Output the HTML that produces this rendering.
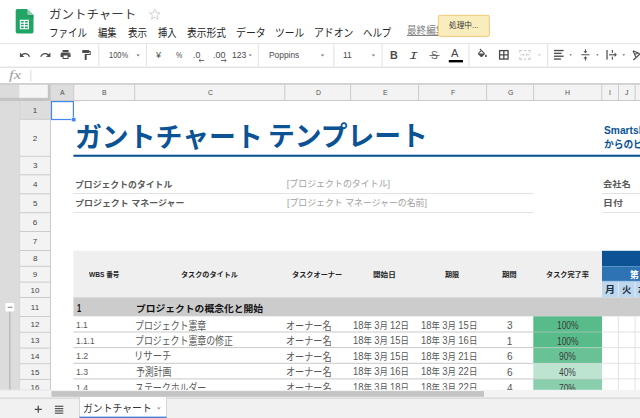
<!DOCTYPE html>
<html lang="ja">
<head>
<meta charset="utf-8">
<title>ガントチャート</title>
<style>
*{box-sizing:border-box;margin:0;padding:0}
html,body{width:640px;height:418px;overflow:hidden;background:#fff}
body{font-family:"Liberation Sans","Noto Sans CJK JP",sans-serif;color:#222;position:relative}
#geo{position:absolute;left:0;top:0;width:640px;height:418px}
#top{position:absolute;left:0;top:0;width:640px;height:418px;pointer-events:none}
.t{position:absolute;white-space:pre;line-height:1;transform-origin:0 50%}
</style>
</head>
<body>
<svg id="geo" width="640" height="418" viewBox="0 0 640 418">
<!-- ===== sheet content ===== -->
<g id="sheet">
  <!-- title underline -->
  <rect x="73.400" y="154.700" width="567" height="2.100" fill="#0b5394"/>
  <!-- info lines -->
  <g fill="#e2e2e2">
    <rect x="73.400" y="193" width="460" height="1"/><rect x="73.400" y="212" width="460" height="1"/>
    <rect x="601.800" y="193" width="39" height="1"/><rect x="601.800" y="212" width="39" height="1"/>
  </g>
  <!-- table header bg -->
  <rect x="73.400" y="250.800" width="528.600" height="46.500" fill="#efefef"/>
  <rect x="602" y="250.800" width="38" height="15.600" fill="#0b5394"/>
  <rect x="602" y="266.400" width="38" height="14.700" fill="#2e74b5"/>
  <rect x="602" y="266.200" width="38" height="0.600" fill="#5b93c9"/>
  <rect x="602" y="281.100" width="38" height="16.200" fill="#bdd7ee"/>
  <rect x="617.900" y="281.100" width="0.900" height="16.200" fill="#e4eef8"/>
  <rect x="634.600" y="281.100" width="0.900" height="16.200" fill="#e4eef8"/>
  <rect x="602" y="280.800" width="38" height="0.700" fill="#8db4dc"/>
  <!-- row 11 -->
  <rect x="73.400" y="297.300" width="567" height="19" fill="#cccccc"/>
  <!-- green cells -->
  <rect x="533.300" y="316.300" width="68.700" height="15.700" fill="#57bb8a"/>
  <rect x="533.300" y="332" width="68.700" height="15.600" fill="#57bb8a"/>
  <rect x="533.300" y="347.600" width="68.700" height="15.700" fill="#68c296"/>
  <rect x="533.300" y="363.300" width="68.700" height="15.600" fill="#bce4d0"/>
  <rect x="533.300" y="378.900" width="68.700" height="15.700" fill="#89cfad"/>
  <!-- row lines -->
  <g fill="#c9c9c9">
    <rect x="73.400" y="331.500" width="460" height="1"/><rect x="73.400" y="347.100" width="460" height="1"/>
    <rect x="73.400" y="362.800" width="460" height="1"/><rect x="73.400" y="378.400" width="460" height="1"/>
  </g>
  <g fill="#d0d0d0" fill-opacity="0.550">
    <rect x="533.300" y="331.500" width="68.700" height="1"/><rect x="533.300" y="347.100" width="68.700" height="1"/>
    <rect x="533.300" y="362.800" width="68.700" height="1"/><rect x="533.300" y="378.400" width="68.700" height="1"/>
  </g>
  <!-- grid on right -->
  <g fill="#e3e3e3">
    <rect x="602" y="331.500" width="38" height="1"/><rect x="602" y="347.100" width="38" height="1"/>
    <rect x="602" y="362.800" width="38" height="1"/><rect x="602" y="378.400" width="38" height="1"/>
    <rect x="617.900" y="316.300" width="1" height="74"/><rect x="634.600" y="316.300" width="1" height="74"/>
  </g>
  <!-- selection -->
  <rect x="51.500" y="101.600" width="21.900" height="17.900" fill="none" stroke="#4285f4" stroke-width="1.200"/>
  <rect x="71.500" y="117.400" width="4.400" height="4.400" fill="#4285f4" stroke="#fff" stroke-width="0.600"/>
</g>
<!-- ===== headers ===== -->
<g id="headers">
  <!-- column header -->
  <rect x="0" y="84.500" width="640" height="16" fill="#f3f3f3"/>
  <rect x="50.600" y="84.500" width="22.900" height="16" fill="#dddddd"/>
  <g fill="#cbcbcb">
    <rect x="73.200" y="84.500" width="1" height="16"/><rect x="134.200" y="84.500" width="1" height="16"/><rect x="284.300" y="84.500" width="1" height="16"/>
    <rect x="350.100" y="84.500" width="1" height="16"/><rect x="418.100" y="84.500" width="1" height="16"/><rect x="486.100" y="84.500" width="1" height="16"/>
    <rect x="533.100" y="84.500" width="1" height="16"/><rect x="601.300" y="84.500" width="1" height="16"/><rect x="618" y="84.500" width="1" height="16"/>
    <rect x="634.600" y="84.500" width="1" height="16"/>
    <rect x="50.600" y="100" width="590" height="1"/>
  </g>
  <!-- row header -->
  <rect x="19.500" y="101" width="31.400" height="289" fill="#f3f3f3"/>
  <rect x="19.500" y="101" width="31.400" height="18" fill="#dddddd"/>
  <g fill="#cbcbcb">
    <rect x="19.300" y="101" width="0.800" height="289"/><rect x="50" y="101" width="1" height="289"/>
    <rect x="19.500" y="118.800" width="31" height="1"/><rect x="19.500" y="155.800" width="31" height="1"/><rect x="19.500" y="174.300" width="31" height="1"/>
    <rect x="19.500" y="193.300" width="31" height="1"/><rect x="19.500" y="212.200" width="31" height="1"/><rect x="19.500" y="231" width="31" height="1"/>
    <rect x="19.500" y="250" width="31" height="1"/><rect x="19.500" y="265.800" width="31" height="1"/><rect x="19.500" y="281.600" width="31" height="1"/>
    <rect x="19.500" y="297" width="31" height="1"/><rect x="19.500" y="316" width="31" height="1"/><rect x="19.500" y="331.800" width="31" height="1"/>
    <rect x="19.500" y="347.600" width="31" height="1"/><rect x="19.500" y="363.200" width="31" height="1"/><rect x="19.500" y="378.900" width="31" height="1"/>
  </g>
  <!-- gutter -->
  <rect x="0" y="84.500" width="19.400" height="306" fill="#dcdcdc"/>
  <!-- corner -->
  <rect x="19.700" y="85" width="28.200" height="13" fill="#f5f5f5"/>
  <rect x="47.800" y="84.500" width="2.900" height="16.500" fill="#c4c4c4"/>
  <rect x="0" y="97.800" width="50.700" height="3.200" fill="#c4c4c4"/>
  <!-- group control -->
  <rect x="9.200" y="311" width="1.300" height="79" fill="#b5b5b5"/>
  <rect x="5.400" y="303" width="8.900" height="8.500" rx="1.200" fill="#fff"/>
  <rect x="7.700" y="306.700" width="4.700" height="1.100" fill="#8a8a8a"/>
</g>
<!-- ===== chrome ===== -->
<g id="chrome">
  <rect x="0" y="0" width="640" height="84" fill="#fff"/>
  <rect x="0" y="43" width="640" height="1" fill="#e6e6e6"/>
  <rect x="0" y="66.700" width="640" height="1" fill="#d8d8d8"/>
  <rect x="0" y="83.200" width="640" height="1.500" fill="#c6c6c6"/>
  <!-- toolbar separators -->
  <g fill="#e2e2e2">
    <rect x="98.300" y="44" width="1" height="22.500"/><rect x="146" y="44" width="1" height="22.500"/><rect x="257.800" y="44" width="1" height="22.500"/>
    <rect x="333.400" y="44" width="1" height="22.500"/><rect x="381.500" y="44" width="1" height="22.500"/><rect x="468.500" y="44" width="1" height="22.500"/>
    <rect x="547.200" y="44" width="1" height="22.500"/>
  </g>
  <rect x="30.400" y="69.800" width="1" height="11.600" fill="#dcdcdc"/>
  <path transform="translate(18.9 49) scale(0.5)" fill="#4d4d4d" d="M12.500 8c-2.650 0-5.050.990-6.900 2.600L2 7v9h9l-3.620-3.620c1.390-1.160 3.160-1.880 5.120-1.880 3.540 0 6.550 2.310 7.600 5.500l2.370-.780C21.080 11.030 17.150 8 12.500 8z"/>
  <path transform="translate(39.4 49) scale(0.5)" fill="#4d4d4d" d="M18.400 10.600C16.550 8.990 14.150 8 11.500 8c-4.650 0-8.580 3.030-9.960 7.220L3.900 16c1.050-3.190 4.050-5.500 7.600-5.500 1.950 0 3.730.720 5.120 1.880L13 16h9V7l-3.600 3.600z"/>
  <path transform="translate(59.6 48.4) scale(0.5)" fill="#4d4d4d" d="M19 8H5c-1.660 0-3 1.340-3 3v6h4v4h12v-4h4v-6c0-1.660-1.340-3-3-3zm-3 11H8v-5h8v5zm3-7c-.55 0-1-.45-1-1s.45-1 1-1 1 .45 1 1-.45 1-1 1zm-1-9H6v4h12V3z"/>
  <path transform="translate(80.2 48.9) scale(0.5)" fill="#4d4d4d" d="M18 4V3c0-.55-.45-1-1-1H5c-.55 0-1 .45-1 1v4c0 .55.45 1 1 1h12c.55 0 1-.45 1-1V6h1v4H9v11c0 .55.45 1 1 1h2c.55 0 1-.45 1-1v-9h8V4h-3z"/>
  <path d="M136.3 54.6H139.9L138.10000000000002 56.4z" fill="#7a7a7a"/>
  <path d="M199 60.500h5.300M199 60.500l1.600-1.400M199 60.500l1.600 1.400" stroke="#4d4d4d" stroke-width="0.800" fill="none"/>
  <path d="M221 60.500h5.200M226.200 60.500l-1.600-1.400M226.200 60.500l-1.600 1.400" stroke="#4d4d4d" stroke-width="0.800" fill="none"/>
  <path d="M248.6 54.6H251.9L250.25 56.3z" fill="#7a7a7a"/>
  <path d="M320.7 54.6H324.3L322.5 56.4z" fill="#7a7a7a"/>
  <path d="M371.7 54.6H375.2L373.45 56.4z" fill="#7a7a7a"/>
  <rect x="429.500" y="55" width="10" height="0.900" fill="#666"/>
  <rect x="448.800" y="60" width="14.200" height="2.400" fill="#000"/>
  <path transform="translate(476.4 48.6) scale(0.5)" fill="#4d4d4d" d="M16.560 8.940L7.620 0 6.210 1.410l2.380 2.380-5.150 5.150c-.59.59-.59 1.540 0 2.120l5.500 5.500c.29.290.68.440 1.060.440s.77-.150 1.060-.440l5.500-5.500c.59-.58.590-1.530 0-2.120zM5.210 10L10 5.210 14.790 10H5.210zM19 11.500s-2 2.170-2 3.500c0 1.100.9 2 2 2s2-.9 2-2c0-1.330-2-3.500-2-3.500z"/>
  <g fill="none" stroke="#4d4d4d" stroke-width="1.350"><rect x="499.600" y="50.600" width="8.450" height="8.450"/><path d="M503.820 50.600v8.450M499.600 54.820h8.450"/></g>
  <g stroke="#c9c9c9" fill="none" stroke-width="1.100"><path d="M519.800 52.400v-1.900h2.400M524 50.500h2M527.800 50.500h2.200v1.900M530 57.200v1.900h-2.200M526 59.100h-2M522.200 59.100h-2.400v-1.900"/><path d="M520.300 54.800h3.600M529.600 54.800h-3.600" stroke-width="0.900"/><path d="M522.700 53.400l1.500 1.400-1.500 1.400M527.200 53.400l-1.500 1.400 1.500 1.400" stroke-width="0.800"/></g>
  <path d="M537.8 54.3H541L539.4 55.9z" fill="#c9c9c9"/>
  <g fill="#4d4d4d"><rect x="554" y="49.850" width="9.600" height="1.350"/><rect x="554" y="52.700" width="7.600" height="1.350"/><rect x="554" y="55.550" width="9.600" height="1.350"/><rect x="554" y="58.400" width="6.900" height="1.350"/></g>
  <path d="M569.4 54.3H572L570.7 55.9z" fill="#7a7a7a"/>
  <path transform="translate(579.3 48.7) scale(0.51)" fill="#4d4d4d" d="M8 19h3v4h2v-4h3l-4-4-4 4zm8-14h-3V1h-2v4H8l4 4 4-4zM4 11v2h16v-2H4z"/>
  <path d="M596 54.3H598.8L597.4 55.9z" fill="#7a7a7a"/>
  <g fill="#4d4d4d"><rect x="606.400" y="50" width="1.250" height="9.600"/><rect x="611.800" y="50" width="1.150" height="2.900"/><rect x="611.800" y="56.700" width="1.150" height="2.900"/><rect x="609" y="54.250" width="6" height="1.100"/><path d="M614.600 52.600l2.300 2.200-2.300 2.200z"/></g>
  <path d="M622.4 54.3H625.2L623.8 55.9z" fill="#7a7a7a"/>
  <g stroke="#4d4d4d" fill="none" stroke-width="1.100"><path d="M633 50.800l6.500 2.600M633 50.800l2.800 6.200M634.600 54.600l3.600-1.600"/><path d="M633.500 60l7-6.500" stroke-width="1.300"/></g>
  <path d="M154.80 9.10L156.24 12.72L160.13 12.97L157.13 15.46L158.09 19.23L154.80 17.15L151.51 19.23L152.47 15.46L149.47 12.97L153.36 12.72z" fill="none" stroke="#c9c9c9" stroke-width="0.850" stroke-linejoin="round"/>
  <path d="M17.400 8.900h9.900l6.200 6.200v16.600a1.700 1.700 0 0 1-1.700 1.700H17.400a1.700 1.700 0 0 1-1.700-1.700V10.600a1.700 1.700 0 0 1 1.700-1.700z" fill="#21a464"/>
  <path d="M27.300 8.900l6.200 6.200h-4.600a1.600 1.600 0 0 1-1.600-1.600z" fill="#8ed1b1"/>
  <path d="M27.800 15.100h5.700v3.600z" fill="#1b8a54" fill-opacity="0.500"/>
  <path d="M19.800 19.700h9.150v9.650h-9.150z M20.95 20.95v1.60h2.80v-1.60z M20.95 23.75v1.60h2.80v-1.60z M20.95 26.6v1.55h2.80v-1.55z M24.95 20.95v1.60h2.85v-1.60z M24.95 23.75v1.60h2.85v-1.60z M24.95 26.6v1.55h2.85v-1.55z" fill="#fff" fill-rule="evenodd"/>
</g>
</svg>
<div class="t" style="left:48.91px;top:8.60px;font-size:12.16px;color:#3a3a3a;transform:scaleX(1.026);">ガントチャート</div>
<div class="t" style="left:48.58px;top:27.87px;font-size:11px;color:#262626;transform:scaleX(0.861);">ファイル</div>
<div class="t" style="left:97.77px;top:28.21px;font-size:11px;color:#262626;transform:scaleX(0.845);">編集</div>
<div class="t" style="left:127.64px;top:28.21px;font-size:11px;color:#262626;transform:scaleX(0.861);">表示</div>
<div class="t" style="left:157.77px;top:28.21px;font-size:11px;color:#262626;transform:scaleX(0.845);">挿入</div>
<div class="t" style="left:187.13px;top:28.14px;font-size:11px;color:#262626;transform:scaleX(0.886);">表示形式</div>
<div class="t" style="left:236.13px;top:27.62px;font-size:11px;color:#262626;transform:scaleX(0.901);">データ</div>
<div class="t" style="left:275.03px;top:28.01px;font-size:11px;color:#262626;transform:scaleX(0.885);">ツール</div>
<div class="t" style="left:314.27px;top:28.14px;font-size:11px;color:#262626;transform:scaleX(0.897);">アドオン</div>
<div class="t" style="left:363.16px;top:28.49px;font-size:11px;color:#262626;transform:scaleX(0.855);">ヘルプ</div>
<div class="t" style="left:406.92px;top:25.52px;font-size:10.4px;color:#808080;transform:scaleX(0.922);text-decoration:underline;">最終編集</div>
<div class="t" style="left:108.69px;top:51.43px;font-size:9px;color:#4a4a4a;transform:scaleX(0.828);">100%</div>
<div class="t" style="left:156.25px;top:51.43px;font-size:9px;color:#4a4a4a;transform:scaleX(1.010);">¥</div>
<div class="t" style="left:175.98px;top:51.48px;font-size:9px;color:#4a4a4a;transform:scaleX(0.786);">%</div>
<div class="t" style="left:192.98px;top:51.43px;font-size:9px;color:#4a4a4a;transform:scaleX(0.975);">.0</div>
<div class="t" style="left:212.97px;top:51.43px;font-size:9px;color:#4a4a4a;transform:scaleX(0.990);">.00</div>
<div class="t" style="left:232.36px;top:51.43px;font-size:9px;color:#4a4a4a;transform:scaleX(0.950);">123</div>
<div class="t" style="left:268.77px;top:50.62px;font-size:9px;color:#4a4a4a;transform:scaleX(0.932);">Poppins</div>
<div class="t" style="left:342.91px;top:51.43px;font-size:9px;color:#4a4a4a;transform:scaleX(0.944);">11</div>
<div class="t" style="left:389.63px;top:50.93px;font-size:10.04px;color:#4a4a4a;font-weight:bold;transform:scaleX(1.073);">B</div>
<div class="t" style="left:409.45px;top:50.88px;font-size:10.42px;color:#4a4a4a;font-style:italic;font-family:'Liberation Mono',monospace;transform:scaleX(1.444);">I</div>
<div class="t" style="left:431.39px;top:49.67px;font-size:11.09px;color:#5a5a5a;transform:scaleX(0.925);">S</div>
<div class="t" style="left:451.04px;top:47.89px;font-size:10.76px;color:#444;transform:scaleX(1.038);">A</div>
<div class="t" style="left:8.69px;top:67.74px;font-size:13.3px;color:#a0a0a0;font-style:italic;font-family:'Liberation Serif','Noto Serif CJK SC',serif;transform:scaleX(1.257);">fx</div>
<div class="t" style="left:59.93px;top:88.85px;font-size:7.8px;color:#4f4f4f;transform:scaleX(0.880);">A</div>
<div class="t" style="left:101.80px;top:88.85px;font-size:7.8px;color:#4f4f4f;transform:scaleX(0.880);">B</div>
<div class="t" style="left:207.71px;top:88.85px;font-size:7.8px;color:#4f4f4f;transform:scaleX(0.880);">C</div>
<div class="t" style="left:315.58px;top:88.85px;font-size:7.8px;color:#4f4f4f;transform:scaleX(0.880);">D</div>
<div class="t" style="left:382.81px;top:88.85px;font-size:7.8px;color:#4f4f4f;transform:scaleX(0.880);">E</div>
<div class="t" style="left:450.99px;top:88.80px;font-size:7.8px;color:#4f4f4f;transform:scaleX(0.880);">F</div>
<div class="t" style="left:507.63px;top:88.85px;font-size:7.8px;color:#4f4f4f;transform:scaleX(0.880);">G</div>
<div class="t" style="left:565.21px;top:88.80px;font-size:7.8px;color:#4f4f4f;transform:scaleX(0.880);">H</div>
<div class="t" style="left:609.26px;top:88.85px;font-size:7.8px;color:#4f4f4f;transform:scaleX(0.880);">I</div>
<div class="t" style="left:625.20px;top:88.80px;font-size:7.8px;color:#4f4f4f;transform:scaleX(0.880);">J</div>
<div class="t" style="left:32.75px;top:106.99px;font-size:8px;color:#444;">1</div>
<div class="t" style="left:32.85px;top:135.04px;font-size:8px;color:#444;">2</div>
<div class="t" style="left:32.90px;top:162.10px;font-size:8px;color:#444;">3</div>
<div class="t" style="left:32.90px;top:180.80px;font-size:8px;color:#444;">4</div>
<div class="t" style="left:32.90px;top:199.80px;font-size:8px;color:#444;">5</div>
<div class="t" style="left:32.85px;top:218.60px;font-size:8px;color:#444;">6</div>
<div class="t" style="left:32.85px;top:237.99px;font-size:8px;color:#444;">7</div>
<div class="t" style="left:32.90px;top:254.80px;font-size:8px;color:#444;">8</div>
<div class="t" style="left:32.85px;top:270.85px;font-size:8px;color:#444;">9</div>
<div class="t" style="left:30.50px;top:286.60px;font-size:8px;color:#444;">10</div>
<div class="t" style="left:30.85px;top:303.60px;font-size:8px;color:#444;">11</div>
<div class="t" style="left:30.55px;top:320.90px;font-size:8px;color:#444;">12</div>
<div class="t" style="left:30.55px;top:336.85px;font-size:8px;color:#444;">13</div>
<div class="t" style="left:30.45px;top:352.55px;font-size:8px;color:#444;">14</div>
<div class="t" style="left:30.50px;top:368.94px;font-size:8px;color:#444;">15</div>
<div class="t" style="left:30.55px;top:383.70px;font-size:8px;color:#444;">16</div>
<div class="t" style="left:75.32px;top:123.81px;font-size:27.5px;color:#0b5394;font-weight:bold;transform:scaleX(0.977);">ガントチャート</div>
<div class="t" style="left:267.94px;top:123.18px;font-size:27.5px;color:#0b5394;font-weight:bold;transform:scaleX(0.974);">テンプレート</div>
<div class="t" style="left:604.02px;top:125.16px;font-size:11px;color:#0b5394;font-weight:bold;transform:scaleX(0.930);">Smartsheet</div>
<div class="t" style="left:603.91px;top:139.08px;font-size:10.5px;color:#0b5394;font-weight:bold;transform:scaleX(0.930);">からのビジネス</div>
<div class="t" style="left:74.71px;top:180.87px;font-size:8.65px;color:#595959;font-weight:bold;transform:scaleX(1.025);">プロジェクトのタイトル</div>
<div class="t" style="left:74.70px;top:199.10px;font-size:8.31px;color:#595959;font-weight:bold;transform:scaleX(1.080);">プロジェクト マネージャー</div>
<div class="t" style="left:286.83px;top:179.60px;font-size:8.95px;color:#a0a0a0;">[プロジェクトのタイトル]</div>
<div class="t" style="left:286.83px;top:199.28px;font-size:8.95px;color:#a0a0a0;transform:scaleX(0.993);">[プロジェクト マネージャーの名前]</div>
<div class="t" style="left:603.21px;top:180.31px;font-size:8.42px;color:#595959;font-weight:bold;transform:scaleX(1.099);">会社名</div>
<div class="t" style="left:602.51px;top:199.00px;font-size:8.53px;color:#595959;font-weight:bold;transform:scaleX(1.164);">日付</div>
<div class="t" style="left:88.75px;top:271.60px;font-size:6.83px;color:#222;font-weight:bold;transform:scaleX(0.963);">WBS 番号</div>
<div class="t" style="left:180.80px;top:271.04px;font-size:7.01px;color:#222;font-weight:bold;transform:scaleX(1.016);">タスクのタイトル</div>
<div class="t" style="left:292.35px;top:271.04px;font-size:7.01px;color:#222;font-weight:bold;transform:scaleX(1.023);">タスクオーナー</div>
<div class="t" style="left:373.43px;top:271.68px;font-size:6.74px;color:#222;font-weight:bold;transform:scaleX(1.123);">開始日</div>
<div class="t" style="left:445.42px;top:271.60px;font-size:6.83px;color:#222;font-weight:bold;transform:scaleX(1.036);">期限</div>
<div class="t" style="left:502.32px;top:271.60px;font-size:6.83px;color:#222;font-weight:bold;transform:scaleX(1.079);">期間</div>
<div class="t" style="left:545.80px;top:271.68px;font-size:6.74px;color:#222;font-weight:bold;transform:scaleX(1.062);">タスク完了率</div>
<div class="t" style="left:630.38px;top:271.02px;font-size:9.2px;color:#fff;font-weight:bold;transform:scaleX(0.950);">第</div>
<div class="t" style="left:605.35px;top:286.29px;font-size:9.33px;color:#1c2a3a;font-weight:bold;transform:scaleX(1.075);">月</div>
<div class="t" style="left:621.65px;top:285.97px;font-size:9.08px;color:#1c2a3a;font-weight:bold;transform:scaleX(1.024);">火</div>
<div class="t" style="left:638.37px;top:285.71px;font-size:8.84px;color:#1c2a3a;font-weight:bold;transform:scaleX(1.024);">水</div>
<div class="t" style="left:76.73px;top:303.56px;font-size:10.4px;color:#111;font-weight:bold;transform:scaleX(0.717);">1</div>
<div class="t" style="left:135.52px;top:304.52px;font-size:9.26px;color:#111;font-weight:bold;transform:scaleX(1.056);">プロジェクトの概念化と開始</div>
<div class="t" style="left:76.27px;top:321.31px;font-size:9.1px;color:#5a5a5a;transform:scaleX(0.923);">1.1</div>
<div class="t" style="left:135.39px;top:320.81px;font-size:10.8px;color:#585858;transform:scaleX(0.825);">プロジェクト憲章</div>
<div class="t" style="left:286.20px;top:320.74px;font-size:10.8px;color:#585858;transform:scaleX(0.844);">オーナー名</div>
<div class="t" style="left:353.02px;top:319.60px;font-size:9.5px;color:#585858;transform:scaleX(0.879);"><span style="font-size:1.13em">18</span>年 <span style="font-size:1.13em">3</span>月 <span style="font-size:1.13em">12</span>日</div>
<div class="t" style="left:421.16px;top:319.60px;font-size:9.5px;color:#585858;transform:scaleX(0.885);"><span style="font-size:1.13em">18</span>年 <span style="font-size:1.13em">3</span>月 <span style="font-size:1.13em">15</span>日</div>
<div class="t" style="left:506.95px;top:321.31px;font-size:10px;color:#555;">3</div>
<div class="t" style="left:556.78px;top:321.31px;font-size:10px;color:#3b3b3b;transform:scaleX(0.840);">100%</div>
<div class="t" style="left:76.28px;top:337.20px;font-size:9.1px;color:#5a5a5a;transform:scaleX(0.916);">1.1.1</div>
<div class="t" style="left:135.39px;top:335.65px;font-size:10.8px;color:#585858;transform:scaleX(0.824);">プロジェクト憲章の修正</div>
<div class="t" style="left:286.20px;top:335.59px;font-size:10.8px;color:#585858;transform:scaleX(0.844);">オーナー名</div>
<div class="t" style="left:353.02px;top:335.25px;font-size:9.5px;color:#585858;transform:scaleX(0.879);"><span style="font-size:1.13em">18</span>年 <span style="font-size:1.13em">3</span>月 <span style="font-size:1.13em">15</span>日</div>
<div class="t" style="left:421.16px;top:335.25px;font-size:9.5px;color:#585858;transform:scaleX(0.885);"><span style="font-size:1.13em">18</span>年 <span style="font-size:1.13em">3</span>月 <span style="font-size:1.13em">16</span>日</div>
<div class="t" style="left:506.76px;top:336.68px;font-size:10px;color:#555;">1</div>
<div class="t" style="left:556.78px;top:336.68px;font-size:10px;color:#3b3b3b;transform:scaleX(0.840);">100%</div>
<div class="t" style="left:76.24px;top:352.34px;font-size:9.1px;color:#5a5a5a;transform:scaleX(0.966);">1.2</div>
<div class="t" style="left:134.39px;top:351.17px;font-size:10.8px;color:#585858;transform:scaleX(0.866);">リサーチ</div>
<div class="t" style="left:286.20px;top:351.88px;font-size:10.8px;color:#585858;transform:scaleX(0.844);">オーナー名</div>
<div class="t" style="left:353.02px;top:350.90px;font-size:9.5px;color:#585858;transform:scaleX(0.879);"><span style="font-size:1.13em">18</span>年 <span style="font-size:1.13em">3</span>月 <span style="font-size:1.13em">15</span>日</div>
<div class="t" style="left:421.16px;top:350.90px;font-size:9.5px;color:#585858;transform:scaleX(0.885);"><span style="font-size:1.13em">18</span>年 <span style="font-size:1.13em">3</span>月 <span style="font-size:1.13em">21</span>日</div>
<div class="t" style="left:506.89px;top:351.61px;font-size:10px;color:#555;">6</div>
<div class="t" style="left:559.25px;top:351.61px;font-size:10px;color:#3b3b3b;transform:scaleX(0.840);">90%</div>
<div class="t" style="left:76.25px;top:368.22px;font-size:9.1px;color:#5a5a5a;transform:scaleX(0.957);">1.3</div>
<div class="t" style="left:136.06px;top:366.89px;font-size:10.8px;color:#585858;transform:scaleX(0.822);">予測計画</div>
<div class="t" style="left:286.20px;top:366.89px;font-size:10.8px;color:#585858;transform:scaleX(0.844);">オーナー名</div>
<div class="t" style="left:353.02px;top:366.11px;font-size:9.5px;color:#585858;transform:scaleX(0.879);"><span style="font-size:1.13em">18</span>年 <span style="font-size:1.13em">3</span>月 <span style="font-size:1.13em">16</span>日</div>
<div class="t" style="left:421.16px;top:366.11px;font-size:9.5px;color:#585858;transform:scaleX(0.885);"><span style="font-size:1.13em">18</span>年 <span style="font-size:1.13em">3</span>月 <span style="font-size:1.13em">22</span>日</div>
<div class="t" style="left:506.89px;top:368.22px;font-size:10px;color:#555;">6</div>
<div class="t" style="left:559.35px;top:368.22px;font-size:10px;color:#3b3b3b;transform:scaleX(0.840);">40%</div>
<div class="t" style="left:76.25px;top:384.33px;font-size:9.1px;color:#5a5a5a;transform:scaleX(0.947);">1.4</div>
<div class="t" style="left:135.01px;top:382.74px;font-size:10.8px;color:#585858;transform:scaleX(0.825);">ステークホルダー</div>
<div class="t" style="left:286.20px;top:382.54px;font-size:10.8px;color:#585858;transform:scaleX(0.844);">オーナー名</div>
<div class="t" style="left:353.02px;top:382.20px;font-size:9.5px;color:#585858;transform:scaleX(0.879);"><span style="font-size:1.13em">18</span>年 <span style="font-size:1.13em">3</span>月 <span style="font-size:1.13em">18</span>日</div>
<div class="t" style="left:421.16px;top:382.20px;font-size:9.5px;color:#585858;transform:scaleX(0.885);"><span style="font-size:1.13em">18</span>年 <span style="font-size:1.13em">3</span>月 <span style="font-size:1.13em">22</span>日</div>
<div class="t" style="left:506.95px;top:383.53px;font-size:10px;color:#555;">4</div>
<div class="t" style="left:559.25px;top:383.59px;font-size:10px;color:#3b3b3b;transform:scaleX(0.840);">70%</div>
<svg id="top" width="640" height="418" viewBox="0 0 640 418">
  <!-- bottom -->
  <rect x="0" y="389.800" width="640" height="8.200" fill="#f3f3f3"/>
  <rect x="0" y="389.600" width="51" height="0.800" fill="#e0e0e0"/>
  <rect x="51.500" y="391.100" width="432.500" height="5.700" fill="#c4c4c4"/>
  <rect x="0" y="398" width="640" height="20" fill="#f1f1f1"/>
  <rect x="0" y="397.600" width="640" height="1" fill="#cfcfcf"/>
  <rect x="79.500" y="397.600" width="87" height="20.400" fill="#fff" stroke="#cfcfcf" stroke-width="0.800"/>
  <rect x="79.900" y="397" width="86.200" height="1.700" fill="#fff"/>
  <rect x="79.500" y="416.600" width="87" height="1.400" fill="#4a7fd9"/>
  <path d="M156.800 407.400h4l-2 2.200z" fill="#9a9a9a"/>
  <path d="M34.700 409.300h7.100M38.250 405.800v7" stroke="#4a4a4a" stroke-width="1.300" fill="none"/>
  <g fill="#555"><rect x="54.900" y="405.700" width="8.400" height="1.200"/><rect x="54.900" y="408" width="8.400" height="1.200"/><rect x="54.900" y="410.300" width="8.400" height="1.200"/><rect x="54.900" y="412.600" width="8.400" height="1.200"/></g>
  <!-- tooltip -->
  <rect x="438.800" y="16.300" width="50.500" height="21" rx="2" fill="#000" fill-opacity="0.080"/>
  <rect x="438.300" y="15.300" width="51" height="21" rx="1.500" fill="#f9edbe" stroke="#f0c36d" stroke-width="0.900"/>
</svg>
<div class="t" style="left:449.31px;top:21.75px;font-size:7.57px;color:#333;transform:scaleX(1.014);">処理中...</div>
<div class="t" style="left:83.14px;top:404.07px;font-size:10.27px;color:#333;transform:scaleX(0.958);">ガントチャート</div>
</body>
</html>
